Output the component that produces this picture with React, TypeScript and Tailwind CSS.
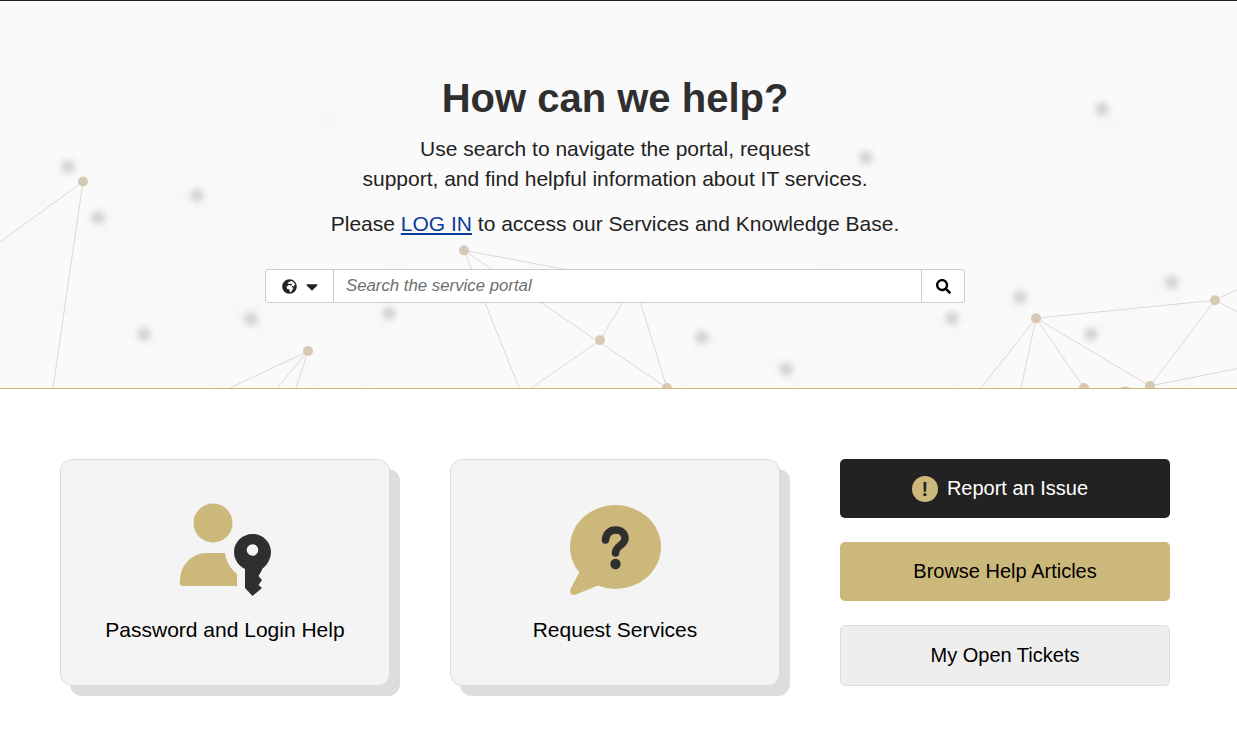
import { FaCaretDown, FaGlobeAfrica, FaSearch } from "react-icons/fa";

const tanNodes = [
  [83, 181], [464, 250], [600, 340], [667, 388], [308, 351],
  [1036, 318], [1215, 300], [1150, 386], [1084, 388],
];

const tanLines = [
  [83, 181, -10, 249], [83, 181, 53, 388],
  [464, 250, 520, 390], [464, 250, 667, 388], [464, 250, 660, 287],
  [600, 340, 530, 389], [600, 340, 630, 290], [667, 388, 632, 275],
  [308, 351, 230, 388], [308, 351, 277, 388], [308, 351, 296, 388],
  [1036, 318, 1215, 300], [1036, 318, 981, 388], [1036, 318, 1021, 388],
  [1036, 318, 1084, 388], [1036, 318, 1150, 386], [1215, 300, 1150, 386],
  [1215, 300, 1240, 288], [1215, 300, 1240, 313], [1150, 386, 1240, 368],
];

const greyNodes = [
  [68, 166], [98, 217], [197, 195], [144, 334], [251, 319], [389, 313],
  [866, 157], [1102, 108], [1020, 297], [952, 318], [1091, 334], [1172, 282],
  [702, 337], [786, 369],
];

const greyLines = [
  [68, 166, 197, 195], [68, 166, 0, 260], [98, 217, 0, 270], [98, 217, 197, 195],
  [98, 217, 144, 334], [98, 217, 251, 319], [197, 195, 251, 319], [197, 195, 330, 112],
  [330, 112, 251, 319], [330, 112, 400, 280], [144, 334, 251, 319], [0, 290, 144, 334],
  [251, 319, 389, 313], [251, 319, 320, 388], [389, 313, 360, 388], [144, 334, 220, 388],
  [866, 157, 1020, 297], [866, 157, 825, 270], [1102, 108, 1020, 297], [1102, 108, 1172, 282],
  [1102, 108, 1237, 240], [1172, 282, 1237, 240], [1020, 297, 1172, 282], [1020, 297, 952, 318],
  [952, 318, 786, 369], [952, 318, 955, 388], [1172, 282, 1091, 334], [1172, 282, 1190, 388],
  [702, 337, 786, 369], [702, 337, 680, 388], [786, 369, 800, 388], [1020, 297, 990, 388],
];

const Network = () => (
  <svg className="absolute inset-0 w-full h-full" viewBox="0 0 1237 388" preserveAspectRatio="none">
    <g className="blur-[4px]">
      {greyLines.map(([x1, y1, x2, y2], i) => (
        <line key={i} x1={x1} y1={y1} x2={x2} y2={y2} stroke="#f4f4f4" strokeWidth="4" />
      ))}
    </g>
    <g className="blur-[3px]">
      {greyNodes.map(([cx, cy], i) => (
        <circle key={i} cx={cx} cy={cy} r="6.5" fill="#d0d0d0" />
      ))}
    </g>
    {tanLines.map(([x1, y1, x2, y2], i) => (
      <line key={i} x1={x1} y1={y1} x2={x2} y2={y2} stroke="#d8cec6" strokeWidth="0.8" />
    ))}
    {tanNodes.map(([cx, cy], i) => (
      <circle key={i} cx={cx} cy={cy} r="5" fill="#d8c9b6" />
    ))}
    <circle cx="1125" cy="397" r="10.500" fill="#d8c9b6" />
  </svg>
);

const UserKeyIcon = () => (
  <svg width="130" height="120" viewBox="0 0 130 120">
    <circle cx="53" cy="33" r="19.5" fill="#cdb87c" />
    <path
      d="M20 91C20 76 31 63 47 63H65C66 72 71 79 77 84V96H23C21 96 19 94 20 91Z"
      fill="#cdb87c"
    />
    <path
      fillRule="evenodd"
      d="M92.5 44C102.6 44 111 52 111 62C111 70 106 76 102 79V80L98.500 86L102 90L98.500 95L102 98L92.5 106L85 98V79C79 76 74 70 74 62C74 52 82.4 44 92.5 44ZM92.5 54.2A5.8 5.8 0 1 0 92.5 65.8A5.8 5.8 0 1 0 92.5 54.2Z"
      fill="#2f2f2f"
    />
  </svg>
);

const QuestionIcon = () => (
  <svg width="130" height="120" viewBox="0 0 130 120">
    <ellipse cx="65.5" cy="57" rx="45.5" ry="42" fill="#cdb87c" />
    <path d="M30 81L20.5 99C19 103 22 106 26 104.5L48 95.5Z" fill="#cdb87c" />
    <path
      d="M55.5 50C56 43 60 40 65.5 40C71 40 75 43.5 75 48.5C75 55 65.5 56 65.5 63"
      fill="none"
      stroke="#2f2f2f"
      strokeWidth="7.5"
      strokeLinecap="round"
    />
    <circle cx="65.5" cy="74" r="5.2" fill="#2f2f2f" />
  </svg>
);

const Card = ({ label, icon }: { label: string; icon: React.ReactNode }) => (
  <div className="w-[330px] h-[227px] bg-[#f4f4f4] border border-[#dddddd] rounded-[12px] shadow-[10px_10px_0_#dddddd] flex flex-col items-center pt-[30px]">
    {icon}
    <div className="mt-[8px] text-[21px] leading-[24px] text-black">{label}</div>
  </div>
);

export default function App() {
  return (
    <div className="min-h-[751px] bg-white font-['Liberation_Sans',Arial,sans-serif]">
      <section className="relative h-[389px] bg-[#fafafa] border-t border-[#222222] border-b border-b-[#cdb87c] overflow-hidden">
        <Network />
        <div className="relative flex flex-col items-center pr-[7px]">
          <h1 className="mt-[73px] text-[40px] leading-[48px] font-bold text-[#2f2f2f]">
            How can we help?
          </h1>
          <p className="mt-[12px] text-[21px] leading-[30px] text-[#222222] text-center">
            Use search to navigate the portal, request
            <br />
            support, and find helpful information about IT services.
          </p>
          <p className="mt-[15px] text-[21px] leading-[30px] text-[#222222]">
            Please <a href="#" className="text-[#0b3d9c] underline">LOG IN</a> to access our Services and Knowledge Base.
          </p>
          <div className="mt-[30px] w-[700px] h-[34px] flex bg-white border border-[#cccccc] rounded-[3px]">
            <div className="w-[68px] flex items-center justify-center gap-[9px] border-r border-[#cccccc] text-[#222222]">
              <FaGlobeAfrica className="w-[15px] h-[15px]" />
              <FaCaretDown className="w-[12px] h-[19px]" />
            </div>
            <div className="flex-1 flex items-center px-[12px] text-[16.8px] italic text-[#6f6f6f]">
              Search the service portal
            </div>
            <div className="w-[43px] flex items-center justify-center border-l border-[#cccccc] text-black">
              <FaSearch className="w-[15px] h-[15px]" />
            </div>
          </div>
        </div>
      </section>

      <main className="flex pt-[70px] pl-[60px] gap-[60px]">
        <Card label="Password and Login Help" icon={<UserKeyIcon />} />
        <Card label="Request Services" icon={<QuestionIcon />} />
        <div className="w-[330px] flex flex-col gap-[24px]">
          <a href="#" className="h-[59px] flex items-center justify-center gap-[9px] pr-[10px] pb-[2px] bg-[#222222] rounded-[5px] text-[20px] text-white">
            <span className="w-[26px] h-[26px] mt-[2px] rounded-full bg-[#cdb87c] flex items-center justify-center text-[20px] font-bold text-[#222222]">!</span>
            Report an Issue
          </a>
          <a href="#" className="h-[59px] flex items-center justify-center pb-[2px] bg-[#cdb87c] rounded-[5px] text-[20px] text-black">
            Browse Help Articles
          </a>
          <a href="#" className="h-[61px] flex items-center justify-center pb-[2px] bg-[#eeeeee] border border-[#dddddd] rounded-[5px] text-[20px] text-black">
            My Open Tickets
          </a>
        </div>
      </main>
    </div>
  );
}
